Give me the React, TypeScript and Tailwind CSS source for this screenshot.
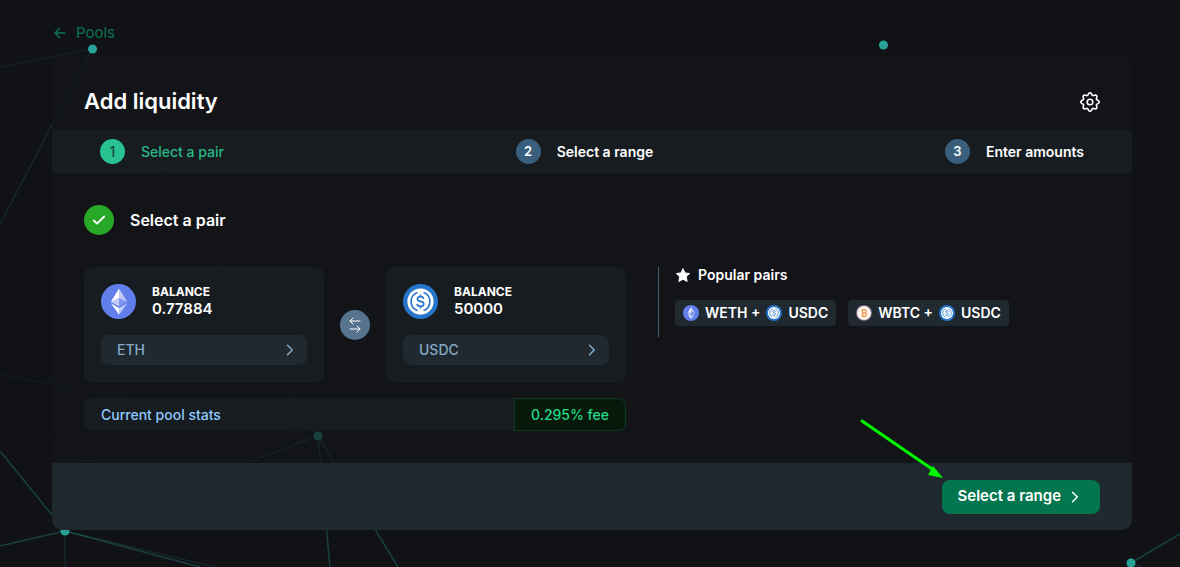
import React from "react";

type IconProps = { className?: string };

function Ethereum({ className }: IconProps) {
  return (
    <svg viewBox="0 0 32 32" className={className} aria-hidden="true">
      <circle cx="16" cy="16" r="16" fill="#627eea" />
      <g fill="#fff">
        <path fillOpacity=".6" d="M16.5 4v8.87l7.5 3.35z" />
        <path d="M16.5 4L9 16.22l7.5-3.35z" />
        <path fillOpacity=".6" d="M16.5 21.97v6.03L24 17.62z" />
        <path d="M16.5 28v-6.03L9 17.62z" />
        <path fillOpacity=".2" d="M16.5 20.57l7.5-4.35-7.5-3.35z" />
        <path fillOpacity=".6" d="M9 16.22l7.5 4.35v-7.7z" />
      </g>
    </svg>
  );
}

function UsdCoin({ className }: IconProps) {
  return (
    <svg viewBox="0 0 32 32" className={className} aria-hidden="true">
      <circle cx="16" cy="16" r="16" fill="#2775ca" />
      <circle cx="16" cy="16" r="12" fill="#fff" />
      <g fill="none" stroke="#2775ca" strokeWidth="1.5">
        <path d="M13.2 7.8a8.7 8.7 0 0 0 0 16.4M18.8 7.8a8.7 8.7 0 0 1 0 16.4" />
        <path d="M18.8 13.500c-.2-1.300-1.200-2-2.800-2-1.700 0-2.800.8-2.800 2.100 0 3.200 5.800 1.400 5.800 4.700 0 1.400-1.200 2.200-3 2.200s-3-.8-3.100-2.300M16 9.500v2M16 20.500v2" />
      </g>
    </svg>
  );
}

function WrappedBitcoin({ className }: IconProps) {
  return (
    <svg viewBox="0 0 32 32" className={className} aria-hidden="true">
      <circle cx="16" cy="16" r="16" fill="#77707f" />
      <circle cx="16" cy="16" r="14" fill="#fdf5ee" />
      <path
        d="M11 10h6.300c4 0 4 5.700 0 5.700H13h4.700c4.400 0 4.400 6.300 0 6.300H11M13 10v12M14.500 7.500V10M17.500 7.500V10M14.500 22v2.500M17.500 22v2.500"
        fill="none"
        stroke="#f09242"
        strokeWidth="2.200"
      />
    </svg>
  );
}

function Chevron({ className }: IconProps) {
  return (
    <svg viewBox="0 0 8 12" className={className} fill="none" stroke="currentColor" strokeWidth="1.500" strokeLinecap="round" strokeLinejoin="round" aria-hidden="true">
      <path d="M1.500 1.200L6.300 6l-4.800 4.800" />
    </svg>
  );
}

const gearOutline = Array.from({ length: 96 }, (_, i) => {
  const angle = (i / 96) * Math.PI * 2;
  const radius = 8.1 + 1.1 * Math.cos(8 * angle);
  return `${(12 + radius * Math.sin(angle)).toFixed(2)},${(12 - radius * Math.cos(angle)).toFixed(2)}`;
}).join(" ");

function Gear({ className }: IconProps) {
  return (
    <svg viewBox="0 0 24 24" className={className} fill="none" stroke="currentColor" strokeWidth="1.600" strokeLinejoin="round" aria-hidden="true">
      <polygon points={gearOutline} />
      <circle cx="12" cy="12" r="2.800" />
    </svg>
  );
}

function Network() {
  return (
    <svg className="pointer-events-none absolute inset-0 -z-10 h-full w-full" aria-hidden="true">
      <g stroke="#2aa198" fill="none">
        <path strokeOpacity=".1" d="M92 49L0 67" strokeWidth="1.500" />
        <path strokeOpacity=".17" d="M92 49L0 224" strokeWidth="1.500" />
        <path strokeOpacity=".08" d="M92 49L318 436" />
        <path strokeOpacity=".1" d="M0 374L318 436" />
        <path strokeOpacity=".04" d="M0 405L270 566" />
        <path strokeOpacity=".32" strokeWidth="1.500" d="M0 451L65 531L0 546M65 531L200 567M318 436L330 567M318 436L398 567M1131 563L1180 534" />
        <path strokeOpacity=".3" strokeWidth="1.500" d="M318 436L65 531" />
        <path strokeOpacity=".22" d="M65 531V567M65 531L215 567M1131 563L1150 570" />
      </g>
      <g fill="#2aa198">
        <circle cx="92.500" cy="49" r="4.500" />
        <circle cx="883.500" cy="45" r="4.500" />
        <circle cx="318" cy="436" r="4.500" />
        <circle cx="65" cy="531" r="4.500" />
        <circle cx="1131" cy="563" r="4.500" />
      </g>
    </svg>
  );
}

const steps = [
  { label: "Select a pair", active: true },
  { label: "Select a range", active: false },
  { label: "Enter amounts", active: false },
];

function Steps() {
  return (
    <ol className="flex h-[43px] items-center justify-between bg-[#171c20] px-12 text-sm font-semibold">
      {steps.map((step, i) => (
        <li key={step.label} className={step.active ? "flex items-center gap-4 font-medium text-[#27b887]" : "flex items-center gap-4"}>
          <span
            className={
              step.active
                ? "flex size-[25px] items-center justify-center rounded-full bg-[#27c28f] text-sm text-[#17483f]"
                : "flex size-[25px] items-center justify-center rounded-full bg-[#3a5f7d] text-[13px]"
            }
          >
            {i + 1}
          </span>
          {step.label}
        </li>
      ))}
    </ol>
  );
}

function TokenCard({ icon, balance, symbol }: { icon: React.ReactNode; balance: string; symbol: string }) {
  return (
    <div className="min-w-0 flex-1 rounded-lg border border-[#191e22] bg-[#171c20] p-4">
      <div className="flex items-center gap-4">
        {icon}
        <div>
          <div className="text-xs leading-[15px] font-bold">BALANCE</div>
          <div className="text-[15px] leading-5 font-semibold">{balance}</div>
        </div>
      </div>
      <button type="button" className="mt-4 flex h-[30px] w-full items-center justify-between rounded-lg bg-[#1f292f] pr-[13px] pl-4 text-sm font-medium text-[#85a9c5]">
        {symbol}
        <Chevron className="h-3 w-2" />
      </button>
    </div>
  );
}

function PairButton({ base, icon }: { base: string; icon: React.ReactNode }) {
  return (
    <button type="button" className="flex h-[26px] items-center gap-[6px] rounded bg-[#1f292f] px-2 text-sm font-semibold whitespace-nowrap">
      {icon}
      <span>{base} +</span>
      <UsdCoin className="size-4" />
      <span>USDC</span>
    </button>
  );
}

export default function App() {
  return (
    <div className="relative isolate min-h-screen overflow-hidden bg-[#111216] pr-12 pb-9 pl-[52px] font-['Inter','Liberation_Sans',sans-serif] text-white">
      <Network />
      <nav className="flex h-[57px] items-center pt-2">
        <a href="#pools" className="flex items-center gap-2 text-[15px] leading-5 text-[#0b7350]">
          <svg viewBox="0 0 16 16" className="size-4" fill="none" stroke="currentColor" strokeWidth="1.500" strokeLinecap="round" strokeLinejoin="round" aria-hidden="true">
            <path d="M13 8H3M7.500 3.500L3 8l4.500 4.500" />
          </svg>
          Pools
        </a>
      </nav>

      <main className="overflow-hidden rounded-[10px] bg-[#121619]/70">
        <header className="flex h-[73px] items-center justify-between px-8 pt-4">
          <h1 className="text-[22px] font-semibold">Add liquidity</h1>
          <button type="button" aria-label="Settings" className="-mr-0.5">
            <Gear className="size-6" />
          </button>
        </header>

        <Steps />

        <section className="px-8 py-8">
          <h2 className="flex items-center gap-4 text-base font-semibold">
            <span className="flex size-[30px] items-center justify-center rounded-full bg-[#27a827]">
              <svg viewBox="0 0 14 12" className="h-3 w-[14px]" fill="none" stroke="currentColor" strokeWidth="1.800" strokeLinecap="round" strokeLinejoin="round" aria-hidden="true">
                <path d="M1.800 6.500l3.200 3.200L12.200 2.500" />
              </svg>
            </span>
            Select a pair
          </h2>

          <div className="mt-8 grid grid-cols-[minmax(0,542px)_minmax(0,1fr)] gap-8">
            <div>
              <div className="flex items-center gap-4">
                <TokenCard icon={<Ethereum className="size-[35px]" />} balance="0.77884" symbol="ETH" />
                <button type="button" aria-label="Swap tokens" className="flex size-[30px] shrink-0 items-center justify-center rounded-full bg-[#56748d]">
                  <svg viewBox="0 0 16 16" className="size-4" fill="none" stroke="currentColor" strokeLinecap="round" strokeLinejoin="round" aria-hidden="true">
                    <path d="M13 4H3M6 1L3 4l3 3M3 12h10M10 9l3 3-3 3" />
                  </svg>
                </button>
                <TokenCard icon={<UsdCoin className="size-[35px]" />} balance="50000" symbol="USDC" />
              </div>

              <div className="mt-4 flex h-[33px] items-stretch justify-between rounded-lg bg-[#171c20] text-sm font-medium">
                <span className="flex items-center pl-[17px] text-[#8fcbff]">Current pool stats</span>
                <span className="flex items-center rounded-r-lg border border-[#0b3a26] bg-[#06190a] px-4 text-[#23da88]">0.295% fee</span>
              </div>
            </div>

            <aside className="h-[70px] border-l border-[#3f5d74] pl-4">
              <h3 className="flex h-4 items-center gap-[7px] text-sm font-semibold">
                <svg viewBox="0 0 24 24" className="size-4" fill="currentColor" stroke="currentColor" strokeWidth="1.500" strokeLinejoin="round" aria-hidden="true">
                  <path d="M12 2.500l3 6.400 7 .9-5.100 4.900 1.300 7L12 18.300l-6.200 3.400 1.300-7L2 9.800l7-.9z" />
                </svg>
                Popular pairs
              </h3>
              <div className="mt-[17px] flex gap-3">
                <PairButton base="WETH" icon={<Ethereum className="size-4" />} />
                <PairButton base="WBTC" icon={<WrappedBitcoin className="size-4" />} />
              </div>
            </aside>
          </div>
        </section>

        <footer className="flex h-[67px] items-center justify-end bg-[#1f292f] px-8">
          <div className="relative">
            <button type="button" className="flex h-[34px] items-center gap-[10px] rounded-lg bg-[#04764f] pr-[21px] pl-4 text-[15px] font-semibold">
              Select a range
              <Chevron className="h-3 w-2" />
            </button>
            <svg viewBox="0 0 84 60" className="pointer-events-none absolute right-[157px] bottom-[35px] h-[60px] w-[84px]" aria-hidden="true">
              <path d="M3 2l70 48" stroke="#00f900" strokeWidth="3" strokeLinecap="round" />
              <path d="M84 59l-15-3 5-9z" fill="#00f900" />
            </svg>
          </div>
        </footer>
      </main>
    </div>
  );
}
